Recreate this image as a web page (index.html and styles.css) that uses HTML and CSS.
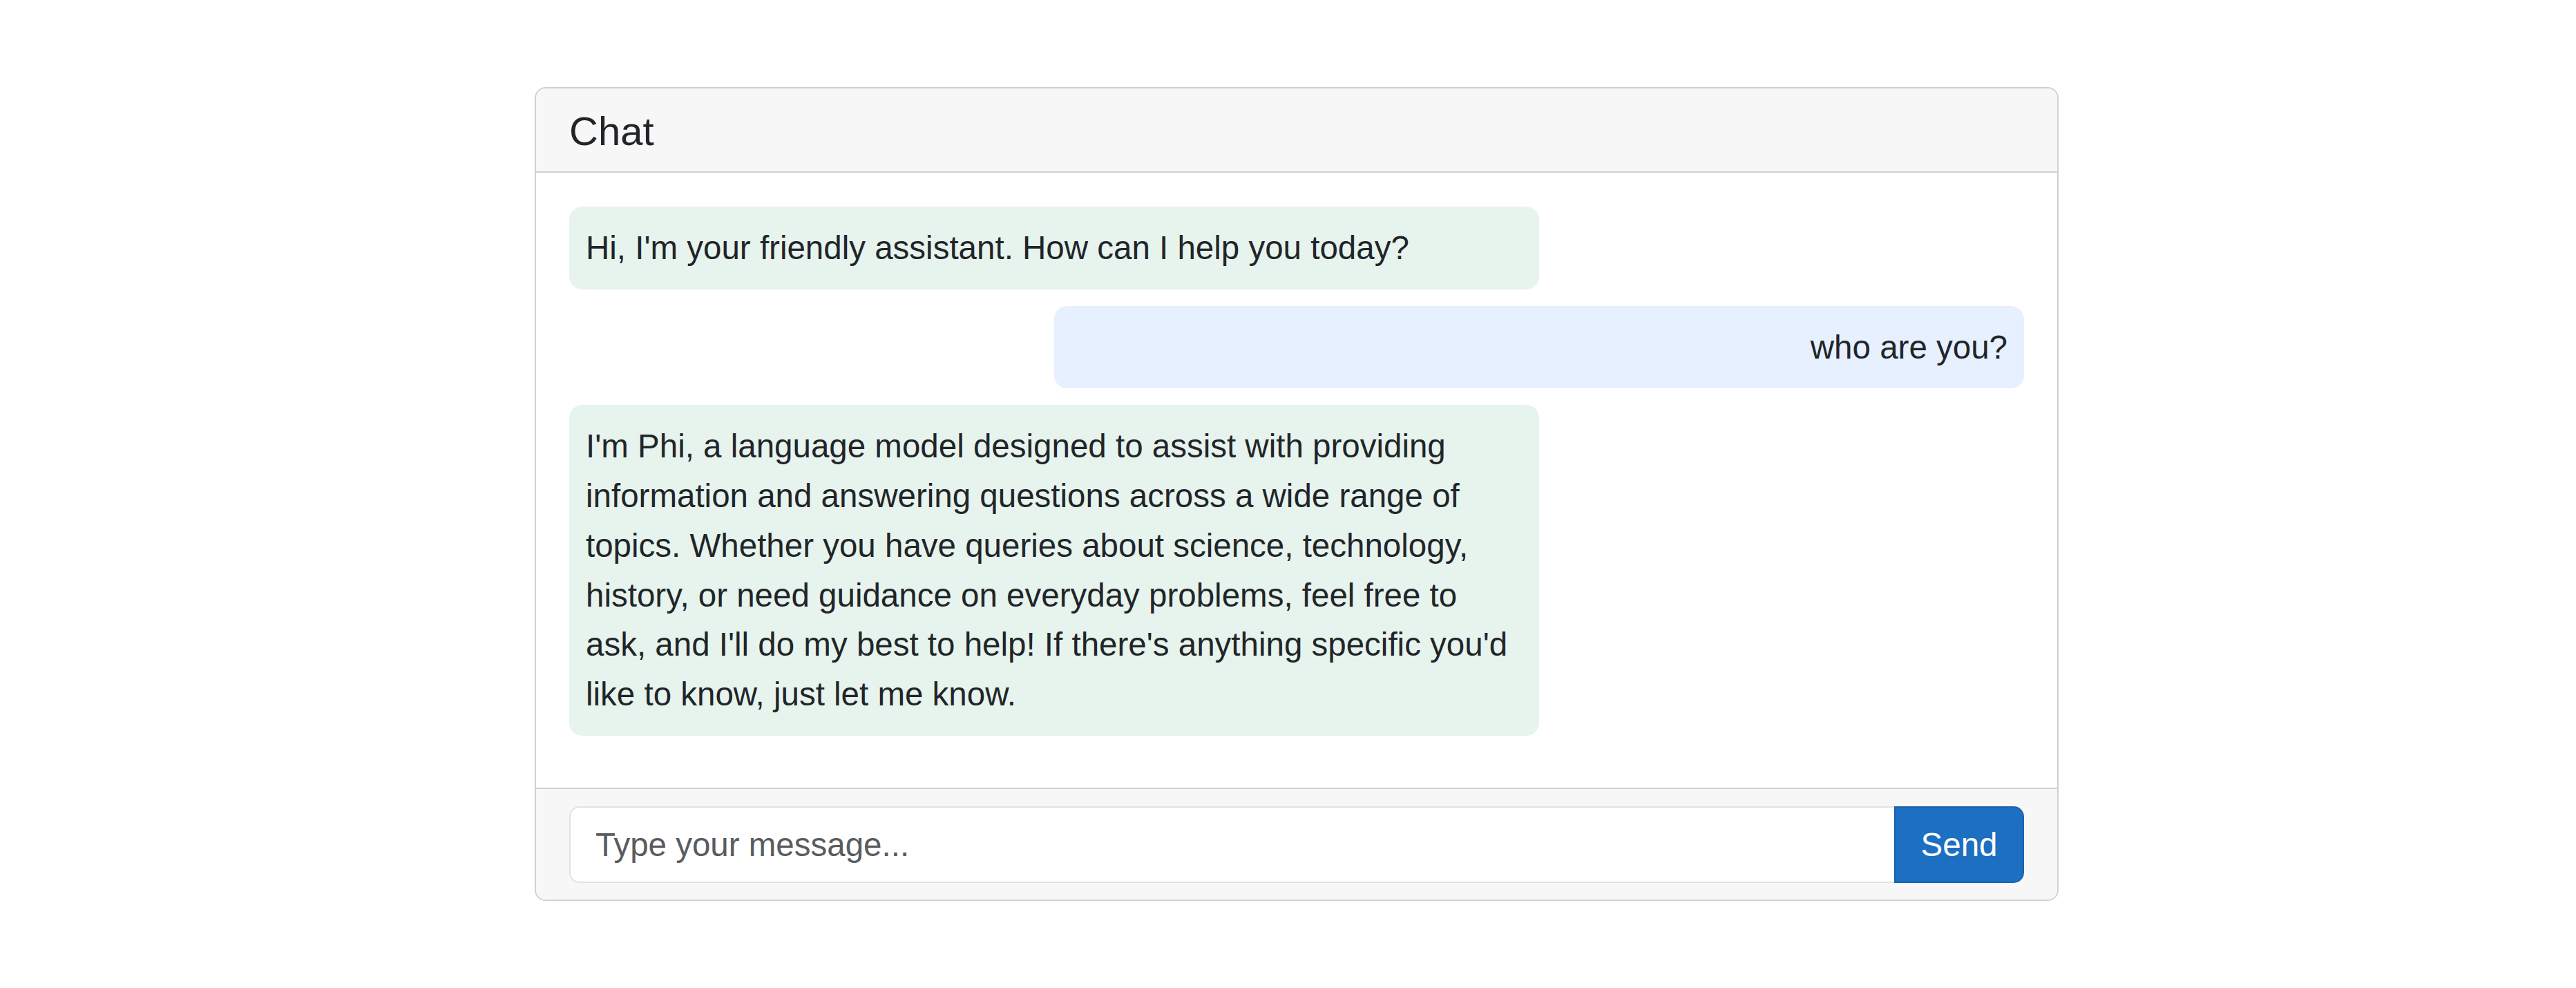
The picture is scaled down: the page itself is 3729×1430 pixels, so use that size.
FILE: index.html
```html
<!DOCTYPE html>
<html lang="en">
<head>
<meta charset="utf-8">
<title>Chat</title>
<link rel="stylesheet" href="styles.css">
</head>
<body>
<div class="page">
  <div class="card">
    <div class="card-header">
      <h4 class="title">Chat</h4>
    </div>
    <div class="card-body">
      <div class="msg msg-bot">Hi, I'm your friendly assistant. How can I help you today?</div>
      <div class="msg msg-user">who are you?</div>
      <div class="msg msg-bot">I'm Phi, a language model designed to assist with providing information and answering questions across a wide range of topics. Whether you have queries about science, technology, history, or need guidance on everyday problems, feel free to ask, and I'll do my best to help! If there's anything specific you'd like to know, just let me know.</div>
    </div>
    <div class="card-footer">
      <div class="input-group">
        <input class="form-control" type="text" placeholder="Type your message...">
        <button class="btn-send" type="button">Send</button>
      </div>
    </div>
  </div>
</div>
</body>
</html>
```
FILE: styles.css
```css
* { box-sizing: border-box; }
html, body {
  margin: 0;
  padding: 0;
  background: #ffffff;
}
body {
  font-family: "Liberation Sans", Arial, sans-serif;
  color: #212529;
  font-size: 47.5px;
  line-height: 71.7px;
}
.page {
  padding: 126px 0 0 774px;
}
.card {
  width: 2206px;
  border: 2px solid #d0d0d0;
  border-radius: 16px;
  overflow: hidden;
  background: #ffffff;
}
.card-header {
  background: #f7f7f7;
  border-bottom: 2px solid #d0d0d0;
  padding: 27px 48px 24px;
}
.title {
  margin: 0;
  font-weight: 400;
  font-size: 58px;
  line-height: 69px;
}
.card-body {
  padding: 49px 48px 75px;
  display: flex;
  flex-direction: column;
}
.msg {
  width: 66.6667%;
  padding: 24px;
  border-radius: 19px;
  margin-bottom: 24px;
}
.msg:last-child { margin-bottom: 0; }
.msg-bot {
  background: #e7f3ed;
  align-self: flex-start;
}
.msg-user {
  background: #e6f0fe;
  align-self: flex-end;
  text-align: right;
}
.card-footer {
  background: #f7f7f7;
  border-top: 2px solid #d0d0d0;
  padding: 25px 48px 24px;
}
.input-group {
  display: flex;
  height: 111px;
}
.form-control {
  flex: 1;
  min-width: 0;
  height: 111px;
  border: 2px solid #dee2e6;
  border-right: none;
  border-radius: 15px 0 0 15px;
  padding: 0 36px;
  font-family: "Liberation Sans", Arial, sans-serif;
  font-size: 47.5px;
  color: #212529;
  background: #ffffff;
  outline: none;
}
.form-control::placeholder {
  color: #595c5f;
  opacity: 1;
}
.btn-send {
  width: 188px;
  height: 111px;
  border: 2px solid #1a62ad;
  border-radius: 0 15px 15px 0;
  background: #1d6fc2;
  color: #ffffff;
  font-family: "Liberation Sans", Arial, sans-serif;
  font-size: 47.5px;
  padding: 0;
  cursor: pointer;
}
```
